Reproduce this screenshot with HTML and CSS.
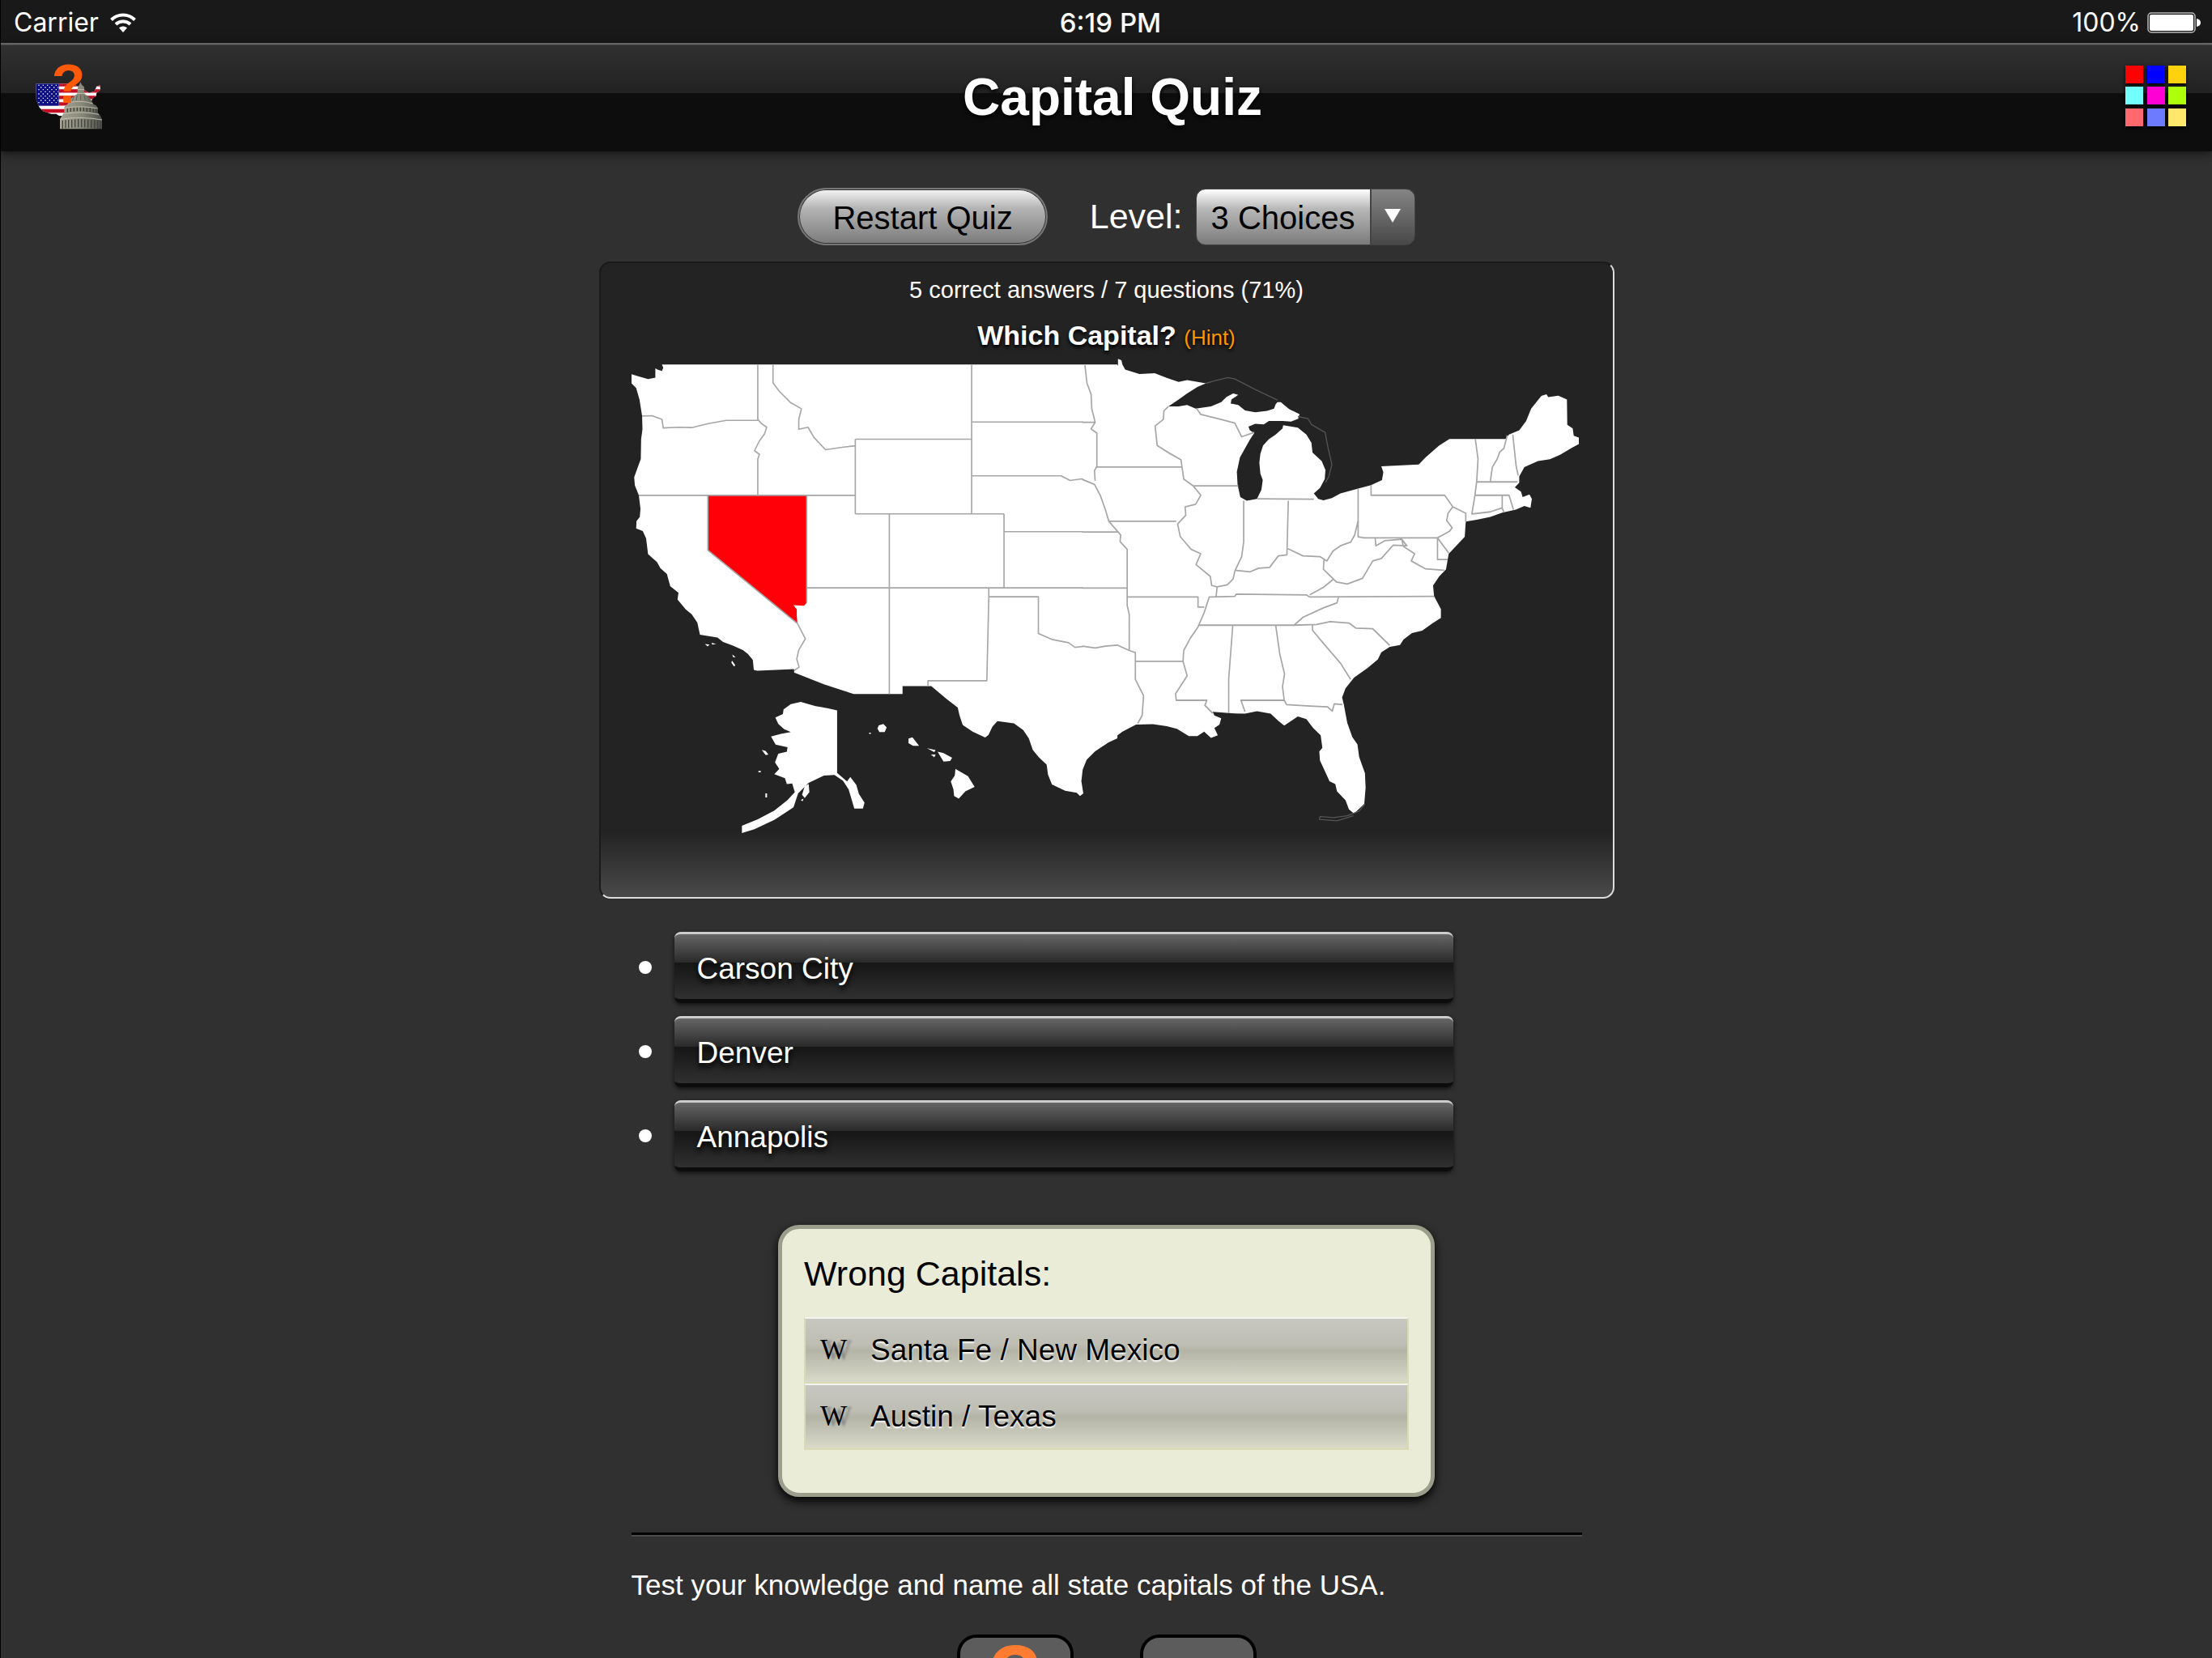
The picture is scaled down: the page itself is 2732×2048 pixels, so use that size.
FILE: index.html
```html
<!DOCTYPE html>
<html lang="en">
<head>
    <meta charset="UTF-8">
    <meta name="viewport" content="width=device-width, initial-scale=1.0">
    <title>Capital Quiz</title>
    <link rel="stylesheet" href="styles.css">
</head>
<body>

    <div class="status">
        <div class="status-left">
            <span>Carrier</span>
            <svg class="wifi" viewBox="0 0 32 24">
                <path d="M1.500 8.500a20.500 20.500 0 0 1 29 0" fill="none" stroke="#fff" stroke-width="4"/>
                <path d="M7 14a13 13 0 0 1 18 0" fill="none" stroke="#fff" stroke-width="4"/>
                <path d="M16 24l-5-5.500a7.500 7.500 0 0 1 10 0z" fill="#fff"/>
            </svg>
        </div>
        <div class="status-time">6:19 PM</div>
        <div class="status-right">
            <span>100%</span>
            <svg class="battery" viewBox="0 0 66 26">
                <rect x="1" y="1" width="58" height="24" rx="4" fill="none" stroke="#bbb" stroke-width="1.500"/>
                <rect x="3" y="3" width="54" height="20" rx="2" fill="#fff"/>
                <path d="M61 8q5 1 5 5t-5 5z" fill="#fff"/>
            </svg>
        </div>
    </div>

    <header class="header">
        <a href="#" class="logo" aria-label="Home">
            <svg viewBox="132 236 252 252">
                <defs>
                    <clipPath id="usa">
                        <path d="M133 312H262L290 322 330 346 350 340 358 322 370 318 372 334 358 346 356 358 344 364 340 374 330 400 310 430 262 432H220L208 424 190 424 160 414 146 400 134 370z"/>
                    </clipPath>
                    <linearGradient id="stone">
                        <stop offset="0" stop-color="#a5a391"/>
                        <stop offset=".5" stop-color="#8a8a7c"/>
                        <stop offset="1" stop-color="#4c504a"/>
                    </linearGradient>
                </defs>
                <g clip-path="url(#usa)">
                    <rect x="130" y="310" width="250" height="130" fill="#fff"/>
                    <path d="M218 316H380M218 339H380M218 363H380M218 387H380M130 413H380" stroke="#c40d22" stroke-width="13"/>
                    <rect x="130" y="308" width="88" height="86" fill="#0d0d84"/>
                    <path d="M142 318H216M142 334H216M142 350H216M142 366H216M142 382H216" stroke="#fff" stroke-width="4" stroke-dasharray="4 12"/>
                    <path d="M150 326H216M150 342H216M150 358H216M150 374H216" stroke="#fff" stroke-width="4" stroke-dasharray="4 12"/>
                </g>
                <path d="M222 480V444L230 430 238 418V400Q240 392 250 388 262 362 286 350L288 326 294 316 298 306 303 316 312 324 313 350Q334 360 346 388 360 392 362 402V420L372 430 378 446V480z" fill="url(#stone)"/>
                <path d="M288 334H312M286 348H314M256 382Q300 372 344 386M240 402Q300 392 362 404M236 424Q300 412 366 426M222 444Q300 432 378 446" fill="none" stroke="#bfbdab" stroke-width="3"/>
                <path d="M274 360L268 376M286 356L282 374M299 354V374M312 356L316 374M324 360L332 378" stroke="#5e6057" stroke-width="3"/>
                <path d="M250 404V418M262 402V416M274 401V415M286 400V414M298 400V414M310 400V414M322 401V415M334 402V416M346 404V418M356 405V420" stroke="#3f413a" stroke-width="4"/>
                <path d="M232 448V478M243 447V477M254 446V476M266 445V475M278 444V474M290 443V474M302 443V474M314 444V474M326 445V475M338 446V476M350 447V477M362 448V478M372 449V478" stroke="#43443c" stroke-width="4"/>
                <text x="191" y="384" class="logo-mark">?</text>
            </svg>
        </a>
        <h1>Capital Quiz</h1>
        <a href="#" class="menu" aria-label="Menu">
            <svg viewBox="0 0 80 84">
                <rect x="5" y="3" width="22" height="22" fill="#ff0000"/>
                <rect x="32" y="3" width="22" height="22" fill="#0000ff"/>
                <rect x="58" y="3" width="22" height="22" fill="#ffd20c"/>
                <rect x="5" y="29" width="22" height="22" fill="#73ffff"/>
                <rect x="32" y="29" width="22" height="22" fill="#ff00d4"/>
                <rect x="58" y="29" width="22" height="22" fill="#aeff0b"/>
                <rect x="5" y="56" width="22" height="22" fill="#ff686d"/>
                <rect x="32" y="56" width="22" height="22" fill="#6d7bff"/>
                <rect x="58" y="56" width="22" height="22" fill="#ffe76c"/>
            </svg>
        </a>
    </header>

    <main class="content">
        <div class="controls">
            <button class="restart">Restart Quiz</button>
            <div class="level">
                <label for="level">Level:</label>
                <div class="select">
                    <select id="level">
                        <option>3 Choices</option>
                        <option>4 Choices</option>
                        <option>5 Choices</option>
                    </select>
                </div>
            </div>
        </div>

        <section class="question">
            <p class="score">5 correct answers / 7 questions (71%)</p>
            <h2>Which Capital? <a href="#" class="hint">(Hint)</a></h2>
            <svg class="map" viewBox="780 440 1174 594">
                <!-- western half -->
                <g transform="translate(740 420) scale(.4082)">
                    <path class="land" d="M97 103L120 110 148 118 170 114 170 86 178 90 190 94 194 84 190 74H1568V1205L1540 1218 1500 1245 1475 1270 1463 1300 1459 1335 1465 1372 1455 1380 1445 1370 1410 1364 1370 1345 1358 1315 1354 1285 1330 1262 1312 1240 1300 1205 1283 1180 1255 1160 1205 1153 1190 1170 1178 1195 1168 1203 1130 1185 1100 1165 1090 1135 1085 1112 1050 1085 1005 1047H918V1071H770L680 1042 590 1006V996L478 1001 468 998 465 968 450 950 435 938 405 925 375 914 358 900 305 892 297 855 280 830 262 815 237 785 240 765 215 745 205 708 185 690 175 672 148 648 142 600 132 578 112 570 113 548 123 535 125 510 120 470 108 440 106 415 115 390 126 360 127 300 131 270 130 230 122 180 112 145 97 130z"/>
                    <!-- Alaska -->
                    <path class="land" d="M720 1121L690 1114 655 1108 610 1095 580 1102 558 1118 556 1132 533 1142 542 1162 560 1178 580 1186 550 1192 520 1200 534 1224 570 1232 568 1246 542 1252 532 1278 545 1298 530 1314 562 1326 568 1344 584 1342 592 1368 570 1392 530 1424 480 1450 432 1470V1492L470 1480 530 1452 588 1414 602 1372 634 1340 680 1318 712 1316 738 1334 755 1360 772 1418 798 1418 803 1400 786 1374 778 1346 760 1322 750 1336 720 1310z"/>
                    <path class="land" d="M622 1350l12-6 2 24-14 18-8-10zM610 1392l8-4-2 8zM492 1240l12 4 8 10-8 2zM482 1304h7v4h-7zM503 1372h5v12h-5z"/>
                    <!-- Hawaii -->
                    <path class="land" d="M846 1166l14-4 10 10-6 14-16 0-6-10zM936 1206l12-4 20 26-18 0-14-8zM992 1235l26 6-4 6zM1004 1254l14 0-4 9zM1024 1246l18 4 26 14-6 10-20 2zM1078 1298l38 22 20 32-28 14-20 22-14-8-2-20-8-24 12-18zM817 1188h5v4h-5z"/>
                    <!-- channel islands -->
                    <path class="land" d="M320 920l14 2-6 5zM340 916l14 4-12 2zM403 952l10 8-8 0zM402 970l10 14-4 4-8-12z"/>
                    <path class="nevada" d="M329 470H628V795L620 804 588 802 598 815V835L600 858 329 636z"/>
                    <path class="border" d="M130 230L160 229 190 240 194 266 240 264 280 265 330 253 385 243 480 243M480 74V240L490 252 507 264 500 285 485 305 470 335 485 346 480 360V470M526 74V130L545 155 580 190 612 208 604 240 604 270 632 264 650 295 685 332 740 324 775 320M120 470H775M775 300V526M775 300H1127M775 526H1225M1127 74V526M1127 248H1500M1127 411H1398L1425 425 1460 420 1495 436M1225 526V750M1225 580H1568M628 750H1568M878 526V1071M628 470V795M329 470V636L600 858 624 904 604 938 598 965 605 990 590 1000M1179 750V777L1173 1031H995V1047M1179 777H1329V888L1370 906 1420 916 1440 930 1475 926 1510 934 1530 927 1568 926"/>
                </g>
                <!-- eastern half -->
                <g transform="translate(1340 420) scale(.4207 .4459)">
                    <path class="land" d="M-5 70H97V52L107 56 110 68 118 82 160 94 205 92 240 105 275 116 300 111 355 120 330 130 300 148 275 165 245 184 275 184 300 180 325 190 370 184 400 172 415 158 435 148 450 152 430 165 428 176 450 180 470 195 500 200 535 196 555 190 560 178 565 172 575 172 585 180 600 192 630 205 626 218 605 226 580 224 540 224 525 234 500 232 480 240 484 250 497 258 485 275 470 300 455 325 446 365 448 400 456 435 475 445 505 440 518 415 522 388 515 370 512 340 515 315 523 292 540 275 560 262 580 245 582 236 625 243 650 262 665 285 668 312 695 335 706 360 704 385 690 410 672 425 685 440 700 444 725 438 750 425 800 412 840 402 872 388 876 366 870 350 980 345 1000 325 1040 292 1070 274H1235L1245 262 1275 250 1295 225 1310 190 1340 155 1355 150 1360 158 1390 154 1415 165 1416 235 1432 245 1435 265 1450 270 1450 288 1430 298 1395 318 1365 330 1330 335 1290 352 1275 378 1275 395 1262 408 1280 420 1285 435 1305 428 1312 440 1308 465 1290 460 1265 470 1225 478 1190 490 1150 498 1118 503 1115 545 1090 570 1068 592 1060 635 1040 655 1022 680 1025 710 1045 745V770L1020 785 990 805 960 812 935 830 925 845 895 850 870 865 860 885 830 908 790 935 765 965 755 990 760 1010 770 1060 785 1100 800 1120 805 1155 822 1200 824 1240 820 1285 790 1312 775 1300 765 1275 740 1250 735 1230 718 1222 700 1185 690 1165 688 1140 697 1130 692 1095 670 1075 650 1050 625 1043 585 1068 568 1055 545 1035 505 1028 470 1035 430 1034 375 1030 380 1040 400 1048 395 1065 380 1075 390 1095 370 1102 350 1085 330 1097 305 1097 270 1077 240 1070 200 1064 150 1065 110 1085 60 1120 20 1140 -5 1165z"/>
                    <path class="coast" d="M355 120L385 112 420 104 440 108 500 137 565 166M625 212L655 218 665 234 705 256 714 300 725 345 716 378 706 395M822 1285L805 1305 770 1318 730 1323 690 1320 688 1328 740 1332 788 1318"/>
                    <path class="border" d="M0 70L6 120 18 150 20 190 30 228 18 246 35 258V350M-8 228H30M35 352H285M35 350L28 362 30 390M-8 386L28 400 45 430 60 470 70 502 105 540 103 558 124 580V735L130 760V860M70 502H268M245 184L232 196 230 220 206 238 212 292 245 312 282 332 290 385 318 404 340 430 325 455 294 462 296 485 272 510 280 545 312 580 340 592 326 622 368 655 372 680 388 684 385 712 365 712 350 755 332 795 310 825 290 860 288 890 300 930 266 980 268 998H358L352 1012 375 1034M318 404H450M328 190L340 206 400 220 440 230 460 268 497 256M466 445V560L460 600 440 640 435 662 418 678 388 684M506 440L672 441M597 445L593 595 568 598 542 630 510 632 485 642 440 638M596 578L640 598 690 600 710 612 728 585 750 570 780 560 792 540 802 500V412M802 500V545L820 548H1035L1070 530 1078 520 1062 500 1066 480 1080 462 1056 430H840V402M852 548L854 570 880 556 930 552 945 570 905 568 870 605 845 612 815 660 770 676 738 670 700 635 702 605M930 552L935 572 968 592 958 612 1000 634 1055 638M1035 548V608H1065M1035 548L1068 590M728 664L700 685 660 706M124 712H332V740H350M372 712L440 710 444 704 650 706 660 712 1025 710M745 710L740 728 700 742 640 768 614 790M335 790H614L680 788 720 780 775 784 795 798 845 800 895 846M668 790V804L700 840 750 895 780 940M434 790L422 940V1034M560 790L572 870 586 925 580 960 585 998H458L470 1030M585 998L592 1010 660 1014 712 1016 726 1028 732 1008 756 1010M148 890H288M130 860L148 866V940L172 985 168 1040 155 1062M-8 848L30 853 60 848 95 845 130 860M-8 532H95M-8 687H124M1146 274L1154 330 1150 393 1145 430 1136 482 1190 476 1225 465V430M1150 393H1270M1145 430H1245L1258 470M1225 465L1230 478M1190 393L1196 352 1210 330 1218 310 1230 300 1240 264M1256 262L1266 350 1272 375M1080 462L1118 480V503"/>
                </g>
            </svg>
        </section>

        <ul class="answers">
            <li><button>Carson City</button></li>
            <li><button>Denver</button></li>
            <li><button>Annapolis</button></li>
        </ul>

        <section class="wrong">
            <h3>Wrong Capitals:</h3>
            <ul>
                <li><a href="#"><span class="wiki">W</span>Santa Fe / New Mexico</a></li>
                <li><a href="#"><span class="wiki">W</span>Austin / Texas</a></li>
            </ul>
        </section>

        <footer class="footer">
            <p>Test your knowledge and name all state capitals of the USA.</p>
            <nav class="tiles">
                <a href="#" class="tile">?</a>
                <a href="#" class="tile" aria-label="More"></a>
            </nav>
        </footer>
    </main>

</body>
</html>
```
FILE: styles.css
```css
* {
    box-sizing: border-box;
    margin: 0;
    padding: 0;
}

body {
    height: 100vh;
    overflow: hidden;
    border-left: 1px solid #000;
    background: #303030;
    color: #fff;
    font-family: "Liberation Sans", Arial, sans-serif;
}

ul {
    list-style: none;
}

a {
    color: inherit;
    text-decoration: none;
}

svg {
    display: block;
}

/* status bar */
.status {
    display: grid;
    grid-template-columns: 1fr auto 1fr;
    align-items: center;
    height: 53px;
    padding: 2px 14px 0 16px;
    background: #191919;
    font: 32px/52px Inter, sans-serif;
}
.status-left, .status-right {
    display: flex;
    align-items: center;
}
.status-left {
    gap: 14px;
}
.status-right {
    justify-content: flex-end;
    gap: 8px;
}
.status-time {
    padding-left: 8px;
    font-size: 33px;
    font-weight: 500;
}
.wifi {
    width: 32px;
    height: 24px;
}
.battery {
    width: 66px;
    height: 26px;
}

/* header */
.header {
    display: flex;
    align-items: center;
    height: 134px;
    padding: 0 32px 3px 43px;
    border-top: 2px solid #666;
    background: linear-gradient(#303030, #222 60px, #0d0d0d 60px);
    box-shadow: inset 0 1px #444, 0 2px 12px #111;
}
.header h1 {
    flex: 1;
    text-align: center;
    font-size: 64px;
    line-height: 72px;
    text-shadow: 0 3px 5px #000;
}
.logo svg {
    width: 84px;
    height: 84px;
    overflow: visible;
}
.logo-mark {
    fill: #ff5a0a;
    font-size: 204px;
    font-weight: bold;
}
.menu svg {
    width: 80px;
    height: 84px;
    filter: drop-shadow(0 2px 2px #000);
}

.content {
    max-width: 1254px;
    margin: 0 auto;
}

/* controls */
.controls {
    display: flex;
    justify-content: center;
    align-items: center;
    gap: 52px;
    padding: 45px 0 20px;
}
.restart {
    height: 71px;
    padding: 2px 41px 0;
    border: 2px solid #777;
    border-radius: 36px;
    background: linear-gradient(#f4f4f4, #b4b4b4 35%, #7b7b7b) padding-box;
    box-shadow: inset 0 0 0 1px #333;
    color: #000;
    font: 40px/64px "Liberation Sans", Arial, sans-serif;
}
.level {
    display: flex;
    align-items: center;
    gap: 16px;
    font-size: 43px;
}
.select {
    position: relative;
}
.select::after {
    content: "";
    position: absolute;
    top: 25px;
    right: 18px;
    border: solid transparent;
    border-width: 17px 10px 0;
    border-top-color: #fff;
    pointer-events: none;
}
.select select {
    display: block;
    width: 271px;
    height: 70px;
    padding: 2px 18px 0;
    border: 1px solid #444;
    border-radius: 12px;
    appearance: none;
    background:
        linear-gradient(#444, #444) right 53px top / 2px 100% no-repeat,
        linear-gradient(#858585, #484848) right / 54px 100% no-repeat,
        linear-gradient(#fff, #b8b8b8 35%, #7b7b7b);
    color: #000;
    font: 40px/64px "Liberation Sans", Arial, sans-serif;
}

/* question panel */
.question {
    padding: 12px 38px 74px;
    border: 2px solid #ddd;
    border-top-color: #1a1a1a;
    border-left-color: #1a1a1a;
    border-radius: 14px;
    background: linear-gradient(transparent calc(100% - 80px), #4a4a4a) #232323;
    text-align: center;
}
.score {
    font-size: 29px;
    line-height: 42px;
}
.question h2 {
    padding-top: 12px;
    font-size: 34px;
    line-height: 46px;
    text-shadow: 0 3px 4px #000;
}
.hint {
    color: #ff9500;
    font-size: 26px;
    font-weight: normal;
}
.map {
    width: 100%;
    height: auto;
}
.map .land {
    fill: #fff;
}
.map .nevada {
    fill: #ff0008;
}
.map .border, .map .coast {
    fill: none;
    stroke: #a6a6a6;
    stroke-width: 4;
    stroke-linejoin: round;
}
.map .coast {
    stroke: #555;
    stroke-width: 3;
}

/* answers */
.answers {
    padding: 41px 199px 0 49px;
}
.answers li {
    display: flex;
    align-items: center;
    gap: 28px;
    margin-bottom: 16px;
}
.answers li::before {
    content: "";
    width: 16px;
    height: 16px;
    border-radius: 50%;
    background: #fff;
}
.answers button {
    flex: 1;
    height: 88px;
    padding: 5px 28px 0;
    border: 0;
    border-top: 3px solid #ccc;
    border-bottom: 5px solid #0c0c0c;
    border-radius: 8px;
    background: linear-gradient(#666, #292929 44%, #161616 44%, #303030);
    box-shadow: 0 2px 5px #111;
    color: #fff;
    font: 37px/64px "Liberation Sans", Arial, sans-serif;
    text-align: left;
    text-shadow: 0 5px 6px #000;
}

/* wrong answers */
.wrong {
    width: 811px;
    margin: 66px auto 0;
    padding: 30px 27px 53px;
    border: 5px solid #9c9e8c;
    border-radius: 26px;
    background: #ebecd8;
    box-shadow: 0 5px 12px #000;
    color: #000;
}
.wrong h3 {
    padding-bottom: 29px;
    font-size: 43px;
    font-weight: normal;
    line-height: 50px;
}
.wrong a {
    display: flex;
    align-items: center;
    height: 82px;
    padding-left: 18px;
    border: 2px solid #dadab4;
    border-top: 2px solid #f4f4ee;
    background: linear-gradient(#c7c7c1, #bebeb4 40%, #b3b3a6 50%, #dadacb);
    font-size: 37px;
    text-shadow: 0 2px 2px #fff;
}
.wiki {
    width: 62px;
    font-family: "Liberation Serif", "Times New Roman", serif;
    font-size: 35px;
    text-shadow: 6px 1px 3px #888;
}

/* footer */
.footer {
    margin: 44px 40px 0;
    padding-top: 42px;
    border-top: 3px solid #000;
    box-shadow: inset 0 2px #4c4c4c;
}
.footer p {
    font-size: 35px;
    line-height: 40px;
}
.tiles {
    display: flex;
    justify-content: center;
    gap: 82px;
    padding-top: 41px;
}
.tile {
    width: 144px;
    height: 144px;
    border: 4px solid #000;
    border-radius: 24px;
    background: #5c5c5c;
    color: #ff7c30;
    font-size: 110px;
    font-weight: bold;
    line-height: 96px;
    text-align: center;
}
```
